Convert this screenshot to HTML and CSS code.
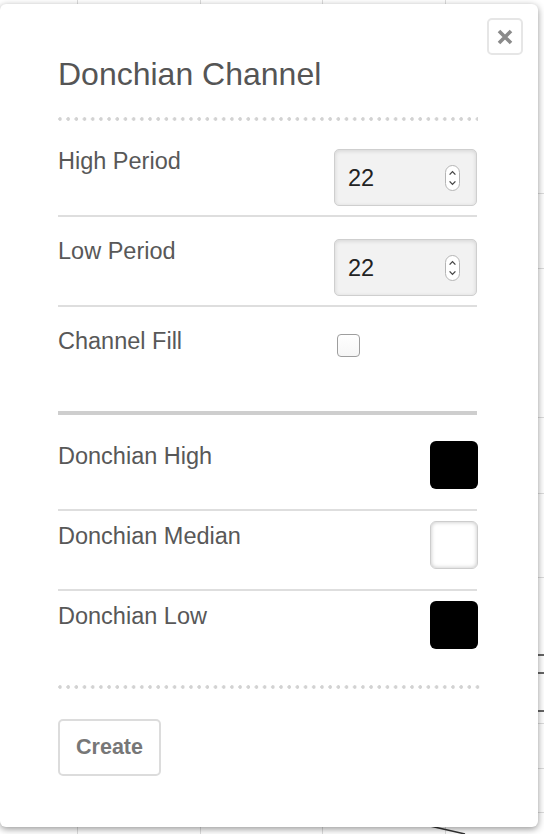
FILE: index.html
```html
<!DOCTYPE html>
<html>
<head>
<meta charset="utf-8">
<link rel="stylesheet" href="styles.css">
</head>
<body>
<svg class="chart" width="544" height="834" viewBox="0 0 544 834">
  <g stroke="#dcdcdc" stroke-width="1">
    <line x1="77.5" y1="0" x2="77.5" y2="834"/>
    <line x1="200.5" y1="0" x2="200.5" y2="834"/>
    <line x1="322.5" y1="0" x2="322.5" y2="834"/>
    <line x1="445.5" y1="0" x2="445.5" y2="834"/>
    <line x1="0" y1="193.5" x2="544" y2="193.5"/>
    <line x1="0" y1="268.5" x2="544" y2="268.5"/>
    <line x1="0" y1="417.5" x2="544" y2="417.5"/>
    <line x1="0" y1="493.5" x2="544" y2="493.5"/>
    <line x1="0" y1="577.5" x2="544" y2="577.5"/>
    <line x1="0" y1="723.5" x2="544" y2="723.5"/>
    <line x1="0" y1="768.5" x2="544" y2="768.5"/>
    <line x1="0" y1="812.5" x2="544" y2="812.5"/>
  </g>
  <g stroke="#333" stroke-width="1.5">
    <line x1="530" y1="655" x2="544" y2="655"/>
    <line x1="535" y1="673" x2="544" y2="673"/>
    <line x1="535" y1="711" x2="544" y2="711"/>
    <line x1="430" y1="826" x2="465" y2="834"/>
  </g>
</svg>
<div class="dialog">
  <button class="close" type="button" aria-label="Close">
    <svg width="16" height="16" viewBox="0 0 16 16"><path d="M2 2 L14 14 M14 2 L2 14" stroke="#8a8a8a" stroke-width="3.6" fill="none"/></svg>
  </button>
  <h1 class="title">Donchian Channel</h1>
  <div class="dots"></div>

  <div class="row first">
    <div class="label">High Period</div>
    <div class="numbox">
      <span class="num">22</span>
      <span class="spin"><svg width="15" height="26" viewBox="0 0 15 26"><path d="M4.6 9.6 L7.5 6.6 L10.4 9.6 M4.6 16.4 L7.5 19.4 L10.4 16.4" stroke="#444" stroke-width="1.3" fill="none"/></svg></span>
    </div>
  </div>
  <div class="row">
    <div class="label">Low Period</div>
    <div class="numbox">
      <span class="num">22</span>
      <span class="spin"><svg width="15" height="26" viewBox="0 0 15 26"><path d="M4.6 9.6 L7.5 6.6 L10.4 9.6 M4.6 16.4 L7.5 19.4 L10.4 16.4" stroke="#444" stroke-width="1.3" fill="none"/></svg></span>
    </div>
  </div>
  <div class="row last">
    <div class="label">Channel Fill</div>
    <div class="control"><span class="check"></span></div>
  </div>

  <div class="thick"></div>

  <div class="colors">
    <div class="crow">
      <div class="label clabel">Donchian High</div>
      <span class="swatch black"></span>
    </div>
    <div class="crow">
      <div class="label clabel">Donchian Median</div>
      <span class="swatch white"></span>
    </div>
    <div class="crow lastc">
      <div class="label clabel">Donchian Low</div>
      <span class="swatch black"></span>
    </div>
  </div>

  <div class="dots dots2"></div>
  <button class="create" type="button">Create</button>
</div>
</body>
</html>
```
FILE: styles.css
```css
html, body {
  margin: 0;
  padding: 0;
}
body {
  width: 544px;
  height: 834px;
  overflow: hidden;
  background: #fff;
  font-family: "Liberation Sans", Arial, Helvetica, sans-serif;
  position: relative;
}
.chart {
  position: absolute;
  left: 0;
  top: 0;
}
.dialog {
  position: relative;
  box-sizing: border-box;
  width: 538px;
  height: 823px;
  margin-top: 4px;
  background: #fff;
  border-radius: 6px;
  box-shadow: 0 2px 7px rgba(0, 0, 0, 0.42);
  padding: 52px 61px 0 58px;
}
.close {
  position: absolute;
  top: 14px;
  right: 15px;
  width: 36px;
  height: 37px;
  box-sizing: border-box;
  border: 2px solid #e6e6e6;
  border-radius: 5px;
  background: #fff;
  padding: 0;
  display: flex;
  align-items: center;
  justify-content: center;
}
.title {
  margin: 0;
  font-weight: normal;
  font-size: 32px;
  line-height: 36px;
  color: #555;
}
.dots {
  margin-top: 25px;
  height: 4px;
  width: 420px;
  background-image: radial-gradient(circle at 2px 2px, #d2d2d2 1.5px, rgba(210,210,210,0) 2.1px);
  background-size: 8.2px 4px;
  background-repeat: repeat-x;
}
.row {
  display: flex;
  justify-content: space-between;
  align-items: flex-start;
  padding: 22px 0 9px;
  border-bottom: 2px solid #dedede;
}
.row.first {
  margin-top: 6px;
}
.row.last {
  border-bottom: none;
  height: 82px;
  padding-bottom: 0;
  box-sizing: content-box;
}
.label {
  font-size: 23.5px;
  line-height: 24px;
  color: #585858;
}
.numbox {
  position: relative;
  box-sizing: border-box;
  width: 143px;
  height: 57px;
  background: #f2f2f2;
  border: 1px solid #cfcfcf;
  border-radius: 5px;
  box-shadow: inset 0 1px 4px rgba(0, 0, 0, 0.13);
  display: flex;
  align-items: center;
  justify-content: space-between;
  padding: 0 16px 0 13px;
}
.num {
  font-size: 23.5px;
  color: #222;
  line-height: 24px;
}
.spin {
  box-sizing: border-box;
  width: 15px;
  height: 26px;
  background: #fff;
  border: 1px solid #b5b5b5;
  border-radius: 8px;
  display: flex;
  align-items: center;
  justify-content: center;
  overflow: hidden;
}
.spin svg {
  display: block;
  margin: -1px;
}
.control {
  width: 143px;
}
.check {
  display: block;
  box-sizing: border-box;
  width: 23px;
  height: 23px;
  margin: 5px 0 0 3px;
  border: 1px solid #9e9e9e;
  border-radius: 4px;
  background: linear-gradient(#fff, #f6f6f6);
}
.thick {
  height: 4px;
  background: #cecece;
}
.colors {
  margin-top: 16px;
}
.crow {
  display: flex;
  justify-content: space-between;
  align-items: flex-start;
  padding: 10px 0 20px;
  border-bottom: 2px solid #dedede;
}
.crow.lastc {
  border-bottom: none;
}
.clabel {
  margin-top: 3px;
}
.swatch {
  display: block;
  box-sizing: border-box;
  width: 48px;
  height: 48px;
  border-radius: 6px;
  margin-right: -1px;
}
.swatch.black {
  background: #000;
}
.swatch.white {
  background: #fff;
  border: 1px solid #cdcdcd;
  box-shadow: inset 0 0 4px rgba(0, 0, 0, 0.25);
}
.dots2 {
  margin-top: 16px;
  width: 422px;
}
.create {
  display: block;
  margin-top: 30px;
  box-sizing: border-box;
  width: 103px;
  height: 57px;
  background: #fff;
  border: 2px solid #dcdcdc;
  border-radius: 5px;
  padding: 0;
  font-family: "Liberation Sans", Arial, Helvetica, sans-serif;
  font-weight: bold;
  font-size: 21.5px;
  color: #777;
}
```
